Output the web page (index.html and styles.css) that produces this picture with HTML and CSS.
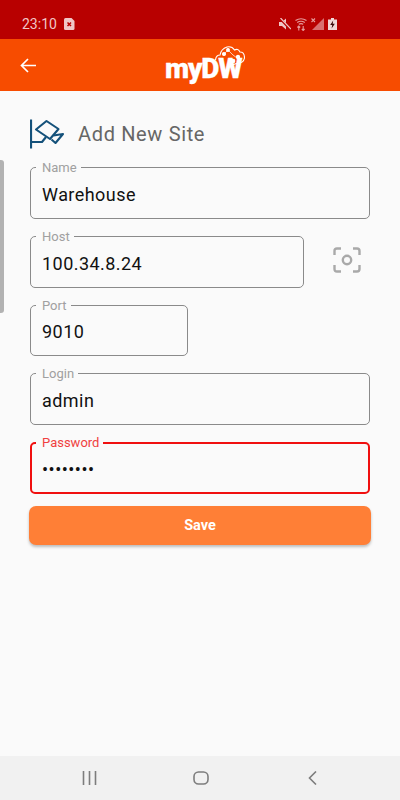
FILE: index.html
```html
<!DOCTYPE html>
<html lang="en">
<head>
<meta charset="UTF-8">
<meta name="viewport" content="width=device-width, initial-scale=1.0">
<title>myDW - Add New Site</title>
<link rel="stylesheet" href="styles.css">
</head>
<body>
<div class="phone">
  <div class="status-bar">
    <div class="status-left">
      <span class="clock">23:10</span>
      <svg class="st-icon" width="11" height="12" viewBox="0 0 11 12"><path d="M1.500 0H7.500L10.500 3V10.500Q10.500 12 9 12H1.500Q0 12 0 10.500V1.500Q0 0 1.500 0Z" fill="#f0c6c6"/><path d="M3.500 4.500L7 8M7 4.500L3.500 8" stroke="#b80000" stroke-width="1.500"/></svg>
    </div>
    <div class="status-right">
      <svg width="12" height="12" viewBox="0 0 12 12"><path d="M0 4H3L7 0.500V11.500L3 8H0Z" fill="#f0c6c6"/><path d="M1 0.500L11.500 11.500" stroke="#b80000" stroke-width="2.400"/><path d="M1.500 0L12 11" stroke="#f0c6c6" stroke-width="1.200"/></svg>
      <svg width="12" height="13" viewBox="0 0 12 13" fill="none" stroke="#e79a9a" stroke-width="1.100"><path d="M0.500 2.500Q6 -1 11.500 2.500M2.200 4.500Q6 2 9.800 4.500M3.800 6.300Q6 5 8.200 6.300"/><path d="M3.800 8V12.500M2.400 9.500L3.800 8L5.200 9.500M8.200 12.500V8M6.800 11L8.200 12.500L9.600 11"/></svg>
      <svg width="13" height="12" viewBox="0 0 13 12"><path d="M13 0V12H1Z" fill="#d96f6f"/><path d="M0.500 0.500L4 4M4 0.500L0.500 4" stroke="#e79a9a" stroke-width="1.100"/></svg>
      <svg width="9" height="12" viewBox="0 0 9 12"><path d="M3 0H6V1.500H9V12H0V1.500H3Z" fill="#f0d8d8"/><path d="M5.200 2.500L2.200 7H4.200L3.600 10.500L6.800 5.800H4.700Z" fill="#3a0a0a"/></svg>
    </div>
  </div>

  <header class="app-bar">
    <svg class="back" width="16" height="15" viewBox="0 0 16 15" fill="none" stroke="#fff" stroke-width="1.700"><path d="M16 7.500H2M8 1L1.500 7.500L8 14"/></svg>
    <div class="logo">
      <span class="logo-text">myDW</span>
      <svg class="logo-cloud" width="30" height="24" viewBox="0 0 30 24" fill="none" stroke="#fff" stroke-width="1.100">
        <path d="M0.500 14Q1 9 5 9Q6 3 12 1Q17 0 19.500 4Q23 2 25 6Q29.500 6 29.500 12Q28.500 17 23 17Q20 18 17 19"/>
        <path d="M9 8L13 4L18 9L22 12" stroke-width="0.700"/>
        <circle cx="9" cy="8" r="1.500" fill="#fff"/><circle cx="13" cy="4" r="1.400" fill="#fff"/><circle cx="18" cy="15" r="1.800" fill="#fff"/><circle cx="23" cy="11" r="1.600" fill="#fff"/>
      </svg>
    </div>
  </header>

  <main class="content">
    <div class="side-handle"></div>
    <div class="title-row">
      <svg class="title-icon" width="34" height="30" viewBox="0 0 34 30" fill="none" stroke="#14517a" stroke-width="2.100" stroke-linejoin="round">
        <path d="M1 0.500V29.500" stroke-width="2.200"/>
        <path d="M1 23H12L16 18"/>
        <path d="M6 10.500L16.500 2L28.500 10L20 20Z"/>
        <path d="M23.500 16.500L33 15L25.500 24L21.500 20.500"/>
      </svg>
      <h1>Add New Site</h1>
    </div>

    <form class="site-form">
      <div class="field"><label>Name</label><div class="value">Warehouse</div></div>
      <div class="host-row">
        <div class="field"><label>Host</label><div class="value">100.34.8.24</div></div>
        <svg class="scan" width="28" height="26" viewBox="0 0 28 26" fill="none" stroke="#a9a9a9" stroke-width="2.400"><path d="M1.500 8V4Q1.500 1.500 4 1.500H8M20 1.500H24Q26.500 1.500 26.500 4V8M26.500 18V22Q26.500 24.500 24 24.500H20M8 24.500H4Q1.500 24.500 1.500 22V18"/><circle cx="14" cy="13" r="4.200"/></svg>
      </div>
      <div class="field port"><label>Port</label><div class="value">9010</div></div>
      <div class="field"><label>Login</label><div class="value">admin</div></div>
      <div class="field error"><label>Password</label><div class="value dots">••••••••</div></div>
      <button type="button" class="save">Save</button>
    </form>
  </main>

  <nav class="nav-bar">
    <svg width="15" height="14" viewBox="0 0 15 14" stroke="#7d7d7d" stroke-width="1.600"><path d="M1.500 0V14M7.500 0V14M13.500 0V14"/></svg>
    <svg class="home" width="16" height="14" viewBox="0 0 16 14" fill="none" stroke="#7d7d7d" stroke-width="1.600"><rect x="1" y="1" width="14" height="12" rx="4.500"/></svg>
    <svg width="9" height="14" viewBox="0 0 9 14" fill="none" stroke="#7d7d7d" stroke-width="1.600"><path d="M8 0.500L1.500 7L8 13.500"/></svg>
  </nav>
</div>
</body>
</html>
```

FILE: styles.css
```css
*{box-sizing:border-box;}
html,body{margin:0;padding:0;}
body{width:400px;height:800px;overflow:hidden;font-family:Roboto,"Liberation Sans",sans-serif;background:#fafafa;}
.phone{display:flex;flex-direction:column;height:800px;}

/* status bar */
.status-bar{height:39px;background:#b80000;display:flex;justify-content:space-between;align-items:center;padding:13px 63px 4px 22px;flex:none;}
.status-left{display:flex;align-items:center;gap:7px;}
.clock{font-size:14px;color:#f0c6c6;}
.status-right{display:flex;align-items:center;gap:4px;}

/* app bar */
.app-bar{position:relative;height:52px;background:#f74c00;display:flex;align-items:center;justify-content:center;flex:none;}
.back{position:absolute;left:20px;top:19px;}
.logo{position:relative;width:80px;height:52px;margin-left:12px;}
.logo-text{position:absolute;left:-1px;top:14px;font-size:28px;line-height:32px;font-weight:900;color:#fff;letter-spacing:-1.200px;-webkit-text-stroke:.3px #fff;}
.logo-cloud{position:absolute;left:49px;top:7px;}

/* content */
.content{position:relative;flex:1;padding:27px 30px 0;}
.side-handle{position:absolute;left:0;top:69px;width:4px;height:153px;background:#b2b2b2;border-radius:0 3px 3px 0;}
.title-row{display:flex;align-items:center;gap:14px;height:32px;}
.title-icon{flex:none;}
h1{margin:0;font-size:20px;font-weight:400;color:#666;letter-spacing:.65px;}

.site-form{display:flex;flex-direction:column;gap:17px;margin-top:17px;}
.field{position:relative;height:51.75px;border:1px solid #8a8a8a;border-radius:5px;display:flex;align-items:center;padding:3px 11px 0;flex:none;}
.field label{position:absolute;left:5px;top:-7px;padding:0 4px 0 6px;background:#fafafa;font-size:13px;line-height:14px;color:#a0a0a0;}
.value{font-size:18px;color:#111;letter-spacing:.45px;}
.host-row{display:flex;align-items:center;flex:none;}
.host-row .field{width:274px;}
.scan{margin:-3px 0 0 29px;}
.port{width:158px;}
.error{border:2px solid #f01010;padding:3px 10px 0;}
.error label{left:4px;top:-8px;color:#f04040;}
.dots{font-size:18px;letter-spacing:.5px;}
.save{margin:-5px -1px 0;height:39px;border:none;border-radius:7px;background:#ff7f36;color:#fff;font-family:inherit;font-size:14.500px;font-weight:700;box-shadow:0 2px 3px rgba(0,0,0,.25);}

/* nav */
.nav-bar{height:44px;background:#f1f1f1;display:flex;justify-content:space-between;align-items:center;padding:0 83px 0 82px;flex:none;}
.home{margin-right:4px;}
```
